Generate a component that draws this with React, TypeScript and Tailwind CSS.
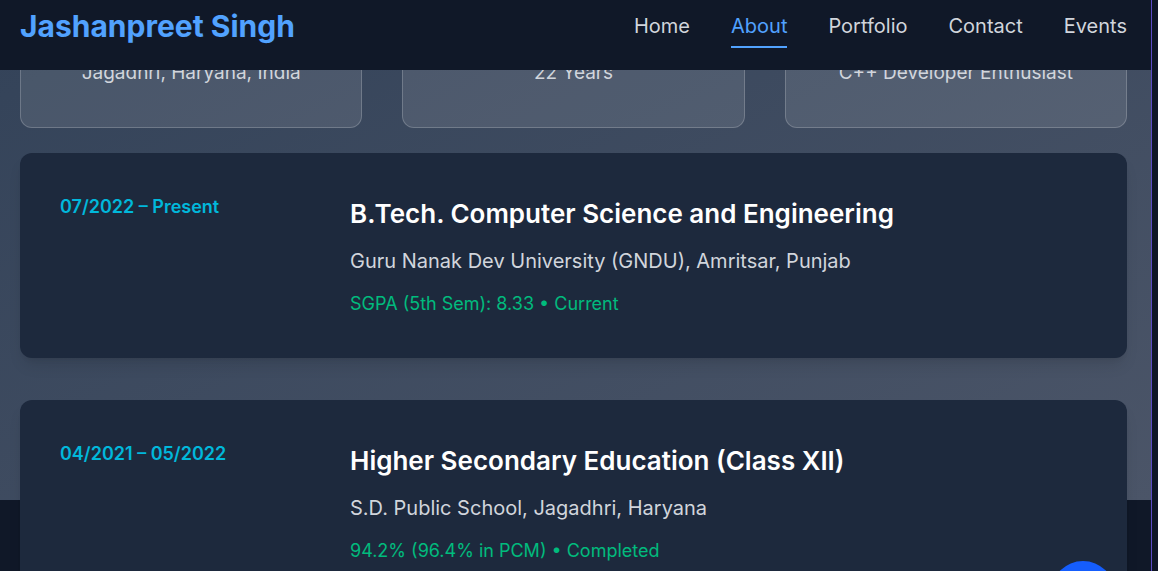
import { ArrowUp } from "lucide-react";

const facts = [
  { title: "Location", value: "Jagadhri, Haryana, India" },
  { title: "Age", value: "22 Years" },
  { title: "Focus", value: "C++ Developer Enthusiast" },
];

const education = [
  {
    period: "07/2022 – Present",
    degree: "B.Tech. Computer Science and Engineering",
    school: "Guru Nanak Dev University (GNDU), Amritsar, Punjab",
    result: "SGPA (5th Sem): 8.33 • Current",
  },
  {
    period: "04/2021 – 05/2022",
    degree: "Higher Secondary Education (Class XII)",
    school: "S.D. Public School, Jagadhri, Haryana",
    result: "94.2% (96.4% in PCM) • Completed",
  },
];

const links = ["Home", "About", "Portfolio", "Contact", "Events"];

const App = () => {
  return (
    <div className="flex h-[571px] overflow-hidden bg-gray-900 font-['Inter',sans-serif]">
      <div className="relative min-w-0 flex-1">
        {/* Navbar */}
        <header className="absolute inset-x-0 top-0 z-20 h-[70px] bg-gray-900">
          <div className="flex h-[52px] items-center justify-between pl-5 pr-6">
            <h1 className="text-3xl font-bold text-blue-400">Jashanpreet Singh</h1>
            <nav className="flex gap-[41px] text-xl text-gray-300">
              {links.map((link) =>
                link === "About" ? (
                  <a key={link} className="relative text-blue-400">
                    {link}
                    <span className="absolute inset-x-0 -bottom-2 h-0.5 bg-blue-400" />
                  </a>
                ) : (
                  <a key={link}>{link}</a>
                )
              )}
            </nav>
          </div>
        </header>

        {/* About section (scrolled, top of the fact cards sits under the navbar) */}
        <section className="-mt-[66px] h-[566px] bg-linear-to-br from-slate-700 to-[#4b5568] pl-5 pr-6">
          <div className="grid grid-cols-3 gap-10">
            {facts.map((f) => (
              <div
                key={f.title}
                className="rounded-xl border border-white/20 bg-white/10 px-6 pt-6 pb-10 text-center"
              >
                <div className="mx-auto mb-[52px] h-12 w-12 rounded-full bg-blue-500/20" />
                <p className="text-[19px] leading-7 text-gray-300">{f.value}</p>
              </div>
            ))}
          </div>

          {/* Education */}
          <div className="mt-[25px] flex flex-col gap-[42px]">
            {education.map((e) => (
              <div
                key={e.degree}
                className="relative grid grid-cols-[290px_1fr] rounded-xl bg-slate-800 p-10 shadow-lg"
              >
                <p className="text-lg font-semibold text-cyan-500">{e.period}</p>
                <div>
                  <h3 className="mt-[5px] text-[26px] leading-8 font-semibold text-white">
                    {e.degree}
                  </h3>
                  <p className="mt-[17px] text-xl text-gray-300">{e.school}</p>
                  <p className="mt-[15px] text-lg text-emerald-500">{e.result}</p>
                </div>
              </div>
            ))}
          </div>
        </section>

        {/* Back to top button */}
        <button className="absolute right-[36px] top-[561px] z-30 flex h-16 w-16 items-center justify-center rounded-full bg-blue-600 text-white">
          <ArrowUp size={24} />
        </button>
      </div>

      {/* Scrollbar strip */}
      <div className="w-[7px] border-l border-[#5b4bc4] bg-[#0f1626]" />
    </div>
  );
};

export default App;
